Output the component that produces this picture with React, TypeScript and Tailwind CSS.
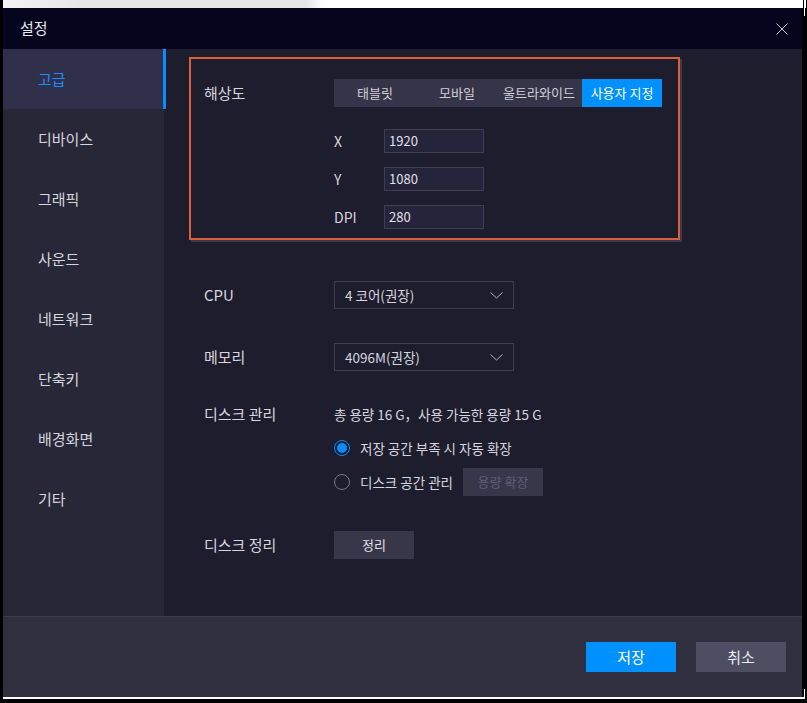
import React from "react";

const sidebar = ["고급", "디바이스", "그래픽", "사운드", "네트워크", "단축키", "배경화면", "기타"];
const tabs = ["태블릿", "모바일", "울트라와이드", "사용자 지정"];

function Chevron() {
  return (
    <svg width="13" height="7" viewBox="0 0 13 7" fill="none">
      <path d="M0.5 0.5 L6.5 6 L12.5 0.5" stroke="#b4b3c4" strokeWidth="1" />
    </svg>
  );
}

function Select({ value }: { value: string }) {
  return (
    <div className="w-[180px] h-[28px] border border-[#3e3d52] bg-[#1e1d2e] flex items-center justify-between pl-[10px] pr-[10px]">
      <span className="text-[13.5px] text-[#d6d6de]">{value}</span>
      <Chevron />
    </div>
  );
}

function NumInput({ label, value }: { label: string; value: string }) {
  return (
    <div className="flex items-center h-[24px]">
      <span className="w-[50px] text-[14px] text-[#d6d6de]">{label}</span>
      <div className="w-[100px] h-[24px] border border-[#3e3d52] bg-[#25243b] flex items-center pl-[4px] text-[13px] text-[#e0e0e8]">
        {value}
      </div>
    </div>
  );
}

export default function App() {
  return (
    <div className="w-[807px] h-[703px] bg-black flex flex-col font-['Noto_Sans_CJK_KR','Noto_Sans',sans-serif] overflow-hidden">
      <div className="h-[8px] flex">
        <div className="w-[3px] bg-black" />
        <div className="w-[800px] bg-[linear-gradient(90deg,#f4f4f4_0%,#e6e6e6_10%,#e6e6e6_38%,#ffffff_40%,#ffffff_100%)]" />
        <div className="w-[1px] bg-black" />
        <div className="w-[2px] bg-white" />
      </div>
      <div className="flex h-[689px]">
        <div className="w-[3px] bg-black" />
        <div className="w-[799px] flex flex-col">
          {/* title bar */}
          <div className="h-[41px] bg-[#05061d] flex items-center justify-between pl-[17px] pr-[14px]">
            <span className="text-[15px] text-[#e8e8f0]">설정</span>
            <svg width="12" height="12" viewBox="0 0 12 12">
              <path d="M0.5 0.5 L11.5 11.5 M11.5 0.5 L0.5 11.5" stroke="#c9c9d4" strokeWidth="1" />
            </svg>
          </div>
          {/* content */}
          <div className="h-[567px] flex">
            <div className="w-[161px] shrink-0 bg-[#282737] flex flex-col">
              {sidebar.map((s, i) =>
                i === 0 ? (
                  <div key={s} className="relative z-10 h-[60px] w-[163px] shrink-0 flex items-center bg-[#31304a] border-r-[3px] border-[#0a8cff] pl-[35px] text-[15px] text-[#1a8cff]">
                    {s}
                  </div>
                ) : (
                  <div key={s} className="h-[60px] flex items-center pl-[35px] text-[15px] text-[#d6d6de]">
                    {s}
                  </div>
                )
              )}
            </div>
            <div className="flex-1 bg-[#1e1d2e] pl-[25px] pt-[8px] flex flex-col">
              {/* resolution box */}
              <div className="w-[491px] h-[183px] border-2 border-[#d9603b] shadow-[2px_2px_0_#3a3a48] pl-[13px] pt-[20px] flex">
                <div className="w-[130px] h-[28px] flex items-center text-[15px] text-[#d6d6de]">해상도</div>
                <div className="flex flex-col">
                  <div className="flex h-[28px] bg-[#353448]">
                    {tabs.map((t, i) => (
                      <div
                        key={t}
                        className={
                          i === 3
                            ? "w-[80px] ml-[2px] flex items-center justify-center bg-[#0091ff] text-white text-[13px]"
                            : "w-[82px] flex items-center justify-center text-[#cfcfd8] text-[13px]"
                        }
                      >
                        {t}
                      </div>
                    ))}
                  </div>
                  <div className="mt-[22px] flex flex-col gap-[14px]">
                    <NumInput label="X" value="1920" />
                    <NumInput label="Y" value="1080" />
                    <NumInput label="DPI" value="280" />
                  </div>
                </div>
              </div>
              {/* other rows */}
              <div className="pl-[15px] flex flex-col">
                <div className="mt-[41px] flex items-center h-[28px]">
                  <span className="w-[130px] text-[15px] text-[#d6d6de]">CPU</span>
                  <Select value="4 코어(권장)" />
                </div>
                <div className="mt-[34px] flex items-center h-[28px]">
                  <span className="w-[130px] text-[15px] text-[#d6d6de]">메모리</span>
                  <Select value="4096M(권장)" />
                </div>
                <div className="mt-[33px] flex items-center h-[20px]">
                  <span className="w-[130px] text-[15px] text-[#d6d6de]">디스크 관리</span>
                  <span className="text-[13.5px] text-[#d6d6de]">총 용량 16 G，사용 가능한 용량 15 G</span>
                </div>
                <div className="mt-[14px] ml-[130px] flex items-center h-[20px]">
                  <span className="w-[16px] h-[16px] rounded-full border-[1.5px] border-[#0a8cff] flex items-center justify-center">
                    <span className="w-[10px] h-[10px] rounded-full bg-[#0a8cff]" />
                  </span>
                  <span className="ml-[10px] text-[13.5px] text-[#d6d6de]">저장 공간 부족 시 자동 확장</span>
                </div>
                <div className="mt-[10px] ml-[130px] flex items-center h-[28px]">
                  <span className="w-[16px] h-[16px] rounded-full border border-[#7a798c]" />
                  <span className="ml-[10px] text-[13.5px] text-[#d6d6de]">디스크 공간 관리</span>
                  <div className="ml-[10px] w-[80px] h-[28px] bg-[#383749] flex items-center justify-center text-[13px] text-[#5f5e77]">
                    용량 확장
                  </div>
                </div>
                <div className="mt-[35px] flex items-center h-[28px]">
                  <span className="w-[130px] text-[15px] text-[#d6d6de]">디스크 정리</span>
                  <div className="w-[80px] h-[28px] bg-[#383749] flex items-center justify-center text-[13px] text-[#e0e0e8]">
                    정리
                  </div>
                </div>
              </div>
            </div>
          </div>
          {/* footer */}
          <div className="h-[81px] bg-[#302f40] border-t border-[#3b3a4e] flex justify-end items-start pt-[25px] pr-[16px] gap-[20px]">
            <div className="w-[90px] h-[30px] bg-[#0091ff] flex items-center justify-center text-[15px] text-white">저장</div>
            <div className="w-[90px] h-[30px] bg-[#4e4d62] flex items-center justify-center text-[15px] text-[#ececf2]">취소</div>
          </div>
        </div>
        <div className="w-[2px] bg-black" />
        <div className="w-[1px] flex flex-col">
          <div className="h-[8px] bg-white" />
          <div className="flex-1 bg-black" />
          <div className="h-[8px] bg-white" />
        </div>
        <div className="w-[2px] bg-black" />
      </div>
      <div className="h-[2px] flex">
        <div className="w-[3px] bg-black" />
        <div className="w-[802px] bg-white" />
      </div>
      <div className="flex-1 bg-black" />
    </div>
  );
}
